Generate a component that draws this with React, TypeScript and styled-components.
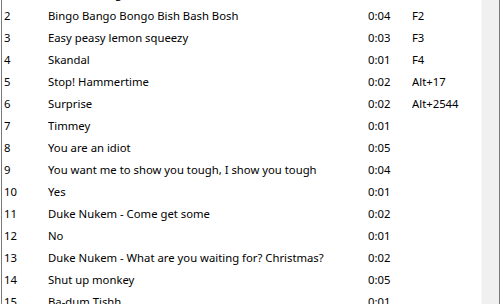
import styled, { createGlobalStyle } from "styled-components";

type Sound = {
  id: number;
  title: string;
  length: string;
  hotkey?: string;
};

const sounds: Sound[] = [
  { id: 1, title: "Ba-dum ching - drum roll", length: "0:03", hotkey: "F1" },
  { id: 2, title: "Bingo Bango Bongo Bish Bash Bosh", length: "0:04", hotkey: "F2" },
  { id: 3, title: "Easy peasy lemon squeezy", length: "0:03", hotkey: "F3" },
  { id: 4, title: "Skandal", length: "0:01", hotkey: "F4" },
  { id: 5, title: "Stop! Hammertime", length: "0:02", hotkey: "Alt+17" },
  { id: 6, title: "Surprise", length: "0:02", hotkey: "Alt+2544" },
  { id: 7, title: "Timmey", length: "0:01" },
  { id: 8, title: "You are an idiot", length: "0:05" },
  { id: 9, title: "You want me to show you tough, I show you tough", length: "0:04" },
  { id: 10, title: "Yes", length: "0:01" },
  { id: 11, title: "Duke Nukem - Come get some", length: "0:02" },
  { id: 12, title: "No", length: "0:01" },
  { id: 13, title: "Duke Nukem - What are you waiting for? Christmas?", length: "0:02" },
  { id: 14, title: "Shut up monkey", length: "0:05" },
  { id: 15, title: "Ba-dum Tishh", length: "0:01" },
];

const GlobalStyle = createGlobalStyle`
  html, body {
    margin: 0;
    padding: 0;
    background: #ffffff;
  }
`;

const Frame = styled.div`
  width: 499px;
  height: 304px;
  margin-left: 1px;
  box-sizing: border-box;
  display: flex;
  border-left: 1px solid #7a7a7a;
  border-right: 1px solid #7a7a7a;
  overflow: hidden;
  font-family: "Segoe UI", "Noto Sans", "Open Sans", sans-serif;
  font-size: 11.3px;
  color: #000000;
`;

const ListArea = styled.div`
  flex: 1;
  overflow: hidden;
  background: #ffffff;
`;

// list is scrolled down a little, so the first row is mostly hidden
const List = styled.div`
  margin-top: -18px;
`;

const Row = styled.div`
  display: grid;
  grid-template-columns: 46px 320px 44px 1fr;
  height: 22px;
  align-items: center;
  white-space: nowrap;
`;

const Cell = styled.div<{ $pad?: number }>`
  padding-left: ${({ $pad }) => $pad ?? 0}px;
  overflow: hidden;
`;

const Scrollbar = styled.div`
  width: 17px;
  background: #f0f0f0;
  border-left: 1px solid #f7f7f7;
`;

export default function App() {
  return (
    <>
      <GlobalStyle />
      <Frame>
        <ListArea>
          <List>
            {sounds.map((s) => (
              <Row key={s.id}>
                <Cell $pad={2}>{s.id}</Cell>
                <Cell>{s.title}</Cell>
                <Cell>{s.length}</Cell>
                <Cell>{s.hotkey ?? ""}</Cell>
              </Row>
            ))}
          </List>
        </ListArea>
        <Scrollbar />
      </Frame>
    </>
  );
}
